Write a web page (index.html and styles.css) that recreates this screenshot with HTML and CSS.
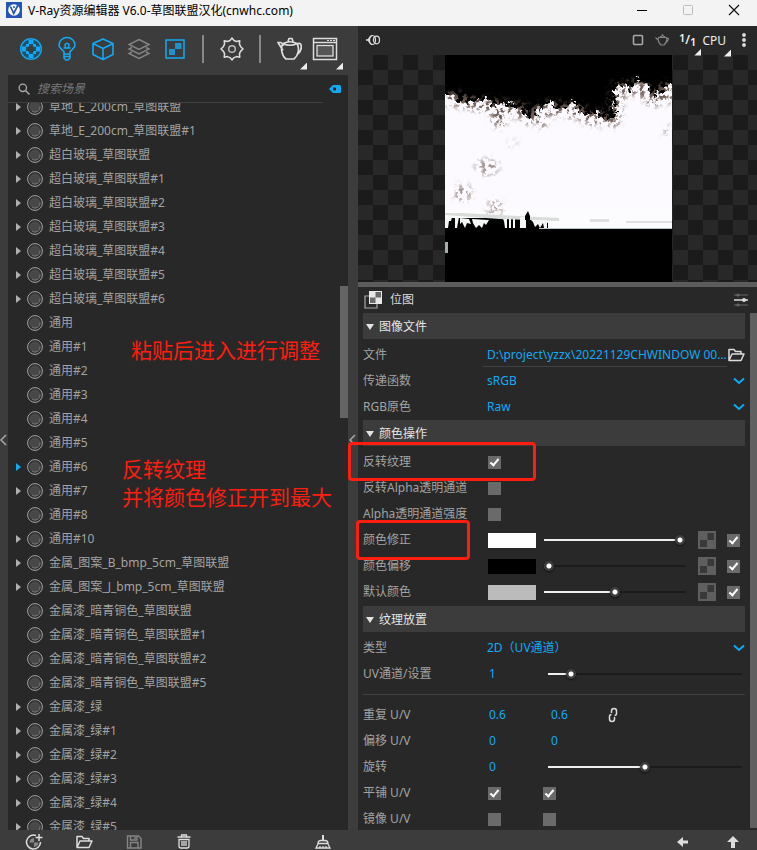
FILE: index.html
```html
<!DOCTYPE html>
<html lang="zh-CN">
<head>
<meta charset="utf-8">
<title>V-Ray资源编辑器</title>
<link rel="stylesheet" href="styles.css">
</head>
<body>
<svg class="defs" aria-hidden="true">
  <symbol id="ball" viewBox="0 0 16 16"><circle cx="8" cy="8" r="7.4" fill="#2b2b2b" stroke="#a6a6a6"/><circle cx="8" cy="8" r="5.8" fill="#484848"/><path d="M13 7.500A5 5 0 0 1 5 12" fill="none" stroke="#777"/></symbol>
  <symbol id="chev" viewBox="0 0 12 8"><path d="M1 1.5l5 4.5 5-4.5" fill="none" stroke="#12aaf5" stroke-width="2"/></symbol>
  <symbol id="tex" viewBox="0 0 18 18"><path d="M0 0h18v18H0z" fill="#5f5f5f"/><path d="M9.500 2H16v7H9.500zM2 9h7v7H2z" fill="#393939"/></symbol>
  <symbol id="folder" viewBox="0 0 18 16"><path d="M2 13.500V2.500h5l1.500 2H14v2.500M2 13.500L5 7h12l-3 6.500z" fill="none" stroke="currentColor" stroke-width="1.500" stroke-linejoin="round"/></symbol>
  <symbol id="pot" viewBox="0 0 26 26"><path d="M7 7.500C4 12 6 20 10 23h8c4-3 6-10 3-15.500M7 7.500Q14 4 21 7.500Q14 11 7 7.500M12 5.500l1-3h3l1 3M7 14.500L2 6.500h3l3 3M21 8c5-3 6 5 1 10" fill="none" stroke="currentColor" stroke-width="1.700" stroke-linejoin="round"/></symbol>
</svg>

<header class="titlebar">
  <svg class="logo" viewBox="0 0 16 16"><path d="M0 0h16v16H0z" fill="#2454b4"/><circle cx="8" cy="8" r="5.800" fill="#fff"/><path d="M4.500 4.500l3.200 7L12 3" fill="none" stroke="#2454b4" stroke-width="1.700"/><circle cx="8" cy="5" r="1" fill="#2454b4"/></svg>
  <h1>V-Ray资源编辑器 V6.0-草图联盟汉化(cnwhc.com)</h1>
  <button class="win" aria-label="最小化"><svg viewBox="0 0 12 12"><path d="M1 6.500h10" stroke="#000"/></svg></button>
  <button class="win" aria-label="最大化"><svg viewBox="0 0 12 12"><rect x="1.500" y="1.500" width="9" height="9" rx="1" fill="none" stroke="#bbb"/></svg></button>
  <button class="win" aria-label="关闭"><svg viewBox="0 0 12 12"><path d="M1 1l10 10M11 1L1 11" stroke="#111" stroke-width="1.200"/></svg></button>
</header>

<main class="app">
  <section class="left">
    <nav class="toolbar">
      <button aria-label="材质"><svg viewBox="0 0 26 26"><circle cx="13" cy="13" r="10.300" fill="#1d4f69" stroke="#18a4e8" stroke-width="1.500"/><path d="M10.500 4h5v4h-5zM10.500 18h5v4h-5zM4 10.500h4v5H4zM18 10.500h4v5h-4zM8 8h3v3H8zM15 8h3v3h-3zM8 15h3v3H8zM15 15h3v3h-3z" fill="#12aaf5"/><path d="M11 10h4l1 1v4l-1 1h-4l-1-1v-4z" fill="#3c3c3c"/></svg></button>
      <button aria-label="灯光"><svg viewBox="0 0 26 26"><path d="M10 18v-2.500C7 13 5 11.500 5 9a8 7.500 0 0 1 16 0c0 2.500-2 4-5 6.500V18M10 18v4l2 2h2l2-2v-4zM10 20.500h6M9.500 12h7M11.500 11.500L11 8.500q2-2.500 4 0l-.5 3" fill="none" stroke="#12aaf5" stroke-width="1.500"/></svg></button>
      <button aria-label="几何体"><svg viewBox="0 0 26 26"><path d="M13 3l10 4.500v11L13 23.500 3 18.500v-11zM3 7.500l10 5 10-5M13 12.500v11" fill="none" stroke="#12aaf5" stroke-width="1.600" stroke-linejoin="round"/></svg></button>
      <button aria-label="图层"><svg viewBox="0 0 26 26"><path d="M13 3.500l10 5-10 5-10-5zM6 11.500l-3 1.500 10 5 10-5-3-1.500M6 16l-3 1.500 10 5 10-5-3-1.500" fill="none" stroke="#858585" stroke-width="1.400"/></svg></button>
      <button aria-label="纹理"><svg viewBox="0 0 26 26"><rect x="4" y="4" width="18" height="18" fill="none" stroke="#12aaf5" stroke-width="1.500"/><path d="M13 7h6.500v6H13zM7 13h6v6H7z" fill="#1b93cf"/></svg></button>
      <span class="sep"></span>
      <button aria-label="设置"><svg viewBox="0 0 26 26"><path d="M11 4.500l2-2.500 2 2.500 2.600 1 3.200-.8-.4 3.200 1.100 2.500L24 13l-2.500 2.400-1.100 2.500.4 3.300-3.200-.6-2.600 1L13 24l-2-2.400-2.600-1-3.200.6.400-3.300-1.100-2.500L2 13l2.500-2.600 1.100-2.500-.4-3.200 3.200.8z" fill="none" stroke="#ddd" stroke-width="1.500" stroke-linejoin="round"/><circle cx="13" cy="13" r="3.300" fill="none" stroke="#bbb" stroke-width="1.500"/></svg></button>
      <span class="sep"></span>
      <button class="more" aria-label="渲染"><svg><use href="#pot"/></svg></button>
      <button class="more" aria-label="帧缓冲"><svg viewBox="0 0 26 26"><path d="M1.500 2.500h23v21h-23zM1.500 6.500h23" fill="none" stroke="#ddd" stroke-width="1.500"/><path d="M15 4.500h2M18 4.500h2M21 4.500h2" stroke="#ddd"/><rect x="5" y="9.500" width="16" height="10.500" fill="#555" stroke="#ddd" stroke-width="1.300"/></svg></button>
    </nav>

    <div class="browser">
      <div class="search">
        <svg class="glass" viewBox="0 0 12 12"><circle cx="4.800" cy="4.800" r="3.700" fill="none" stroke="#aaa" stroke-width="1.300"/><path d="M7.500 7.500l4 4" stroke="#aaa" stroke-width="1.500"/></svg>
        <input type="text" placeholder="搜索场景" aria-label="搜索场景">
        <svg class="tag" viewBox="0 0 12 8"><path d="M0 4l4-4h6.500q1.500 0 1.500 1.500v5Q12 8 10.500 8H4z" fill="#12aaf5"/><circle cx="5.500" cy="4" r="1.700" fill="#282828"/></svg>
      </div>
      <div class="scroll">
        <ul class="assets">
          <li><button class="tw" aria-label="展开"></button><svg><use href="#ball"/></svg>草地_E_200cm_草图联盟</li>
          <li><button class="tw" aria-label="展开"></button><svg><use href="#ball"/></svg>草地_E_200cm_草图联盟#1</li>
          <li><button class="tw" aria-label="展开"></button><svg><use href="#ball"/></svg>超白玻璃_草图联盟</li>
          <li><button class="tw" aria-label="展开"></button><svg><use href="#ball"/></svg>超白玻璃_草图联盟#1</li>
          <li><button class="tw" aria-label="展开"></button><svg><use href="#ball"/></svg>超白玻璃_草图联盟#2</li>
          <li><button class="tw" aria-label="展开"></button><svg><use href="#ball"/></svg>超白玻璃_草图联盟#3</li>
          <li><button class="tw" aria-label="展开"></button><svg><use href="#ball"/></svg>超白玻璃_草图联盟#4</li>
          <li><button class="tw" aria-label="展开"></button><svg><use href="#ball"/></svg>超白玻璃_草图联盟#5</li>
          <li><button class="tw" aria-label="展开"></button><svg><use href="#ball"/></svg>超白玻璃_草图联盟#6</li>
          <li class="leaf"><svg><use href="#ball"/></svg>通用</li>
          <li class="leaf"><svg><use href="#ball"/></svg>通用#1</li>
          <li class="leaf"><svg><use href="#ball"/></svg>通用#2</li>
          <li class="leaf"><svg><use href="#ball"/></svg>通用#3</li>
          <li class="leaf"><svg><use href="#ball"/></svg>通用#4</li>
          <li class="leaf"><svg><use href="#ball"/></svg>通用#5</li>
          <li><button class="tw active" aria-label="展开"></button><svg><use href="#ball"/></svg>通用#6</li>
          <li><button class="tw" aria-label="展开"></button><svg><use href="#ball"/></svg>通用#7</li>
          <li class="leaf"><svg><use href="#ball"/></svg>通用#8</li>
          <li><button class="tw" aria-label="展开"></button><svg><use href="#ball"/></svg>通用#10</li>
          <li><button class="tw" aria-label="展开"></button><svg><use href="#ball"/></svg>金属_图案_B_bmp_5cm_草图联盟</li>
          <li><button class="tw" aria-label="展开"></button><svg><use href="#ball"/></svg>金属_图案_J_bmp_5cm_草图联盟</li>
          <li class="leaf"><svg><use href="#ball"/></svg>金属漆_暗青铜色_草图联盟</li>
          <li class="leaf"><svg><use href="#ball"/></svg>金属漆_暗青铜色_草图联盟#1</li>
          <li class="leaf"><svg><use href="#ball"/></svg>金属漆_暗青铜色_草图联盟#2</li>
          <li class="leaf"><svg><use href="#ball"/></svg>金属漆_暗青铜色_草图联盟#5</li>
          <li><button class="tw" aria-label="展开"></button><svg><use href="#ball"/></svg>金属漆_绿</li>
          <li><button class="tw" aria-label="展开"></button><svg><use href="#ball"/></svg>金属漆_绿#1</li>
          <li><button class="tw" aria-label="展开"></button><svg><use href="#ball"/></svg>金属漆_绿#2</li>
          <li><button class="tw" aria-label="展开"></button><svg><use href="#ball"/></svg>金属漆_绿#3</li>
          <li><button class="tw" aria-label="展开"></button><svg><use href="#ball"/></svg>金属漆_绿#4</li>
          <li><button class="tw" aria-label="展开"></button><svg><use href="#ball"/></svg>金属漆_绿#5</li>
        </ul>
        <span class="thumb"></span>
      </div>
    </div>

    <footer class="actions">
      <button aria-label="新建材质"><svg viewBox="0 0 18 16"><path d="M11 1.500A7 7 0 1 0 15.500 8" fill="none" stroke="#ddd" stroke-width="1.500"/><path d="M9 4v4.500h4.500A5 5 0 0 1 9 13V8.500H4.500A5 5 0 0 1 9 4z" fill="#888"/><path d="M14 0v7M10.500 3.500h7" stroke="#ddd" stroke-width="1.500"/></svg></button>
      <button aria-label="打开"><svg><use href="#folder"/></svg></button>
      <button aria-label="保存"><svg viewBox="0 0 18 16"><path d="M2.500 2h11L16 4.500V14H2.500zM5.500 14V8.500H13V14M5.500 2v4H12V2M10 3v2" fill="none" stroke="#858585" stroke-width="1.400"/></svg></button>
      <button aria-label="删除"><svg viewBox="0 0 18 16"><path d="M2.500 3h13M6.500 2.500V1h5v1.500M4 5.500V12q0 2 2 2h6q2 0 2-2V5.500zM7 7v5M9 7v5M11 7v5" fill="none" stroke="#ddd" stroke-width="1.300"/></svg></button>
      <button class="purge" aria-label="清理"><svg viewBox="0 0 18 16"><path d="M8 1h2v5H8z" fill="#ddd"/><path d="M4 9.500q0-3 3-3h4q3 0 3 3zM4 10l-2 4h14l-2-4M6 14v-2M9 14v-2M12 14v-2" fill="none" stroke="#ddd" stroke-width="1.300"/></svg></button>
    </footer>
    <svg class="fold fold-left" viewBox="0 0 7 12"><path d="M6 1L1 6l5 5" fill="none" stroke="#aaa" stroke-width="1.500"/></svg>
    <svg class="fold fold-right" viewBox="0 0 7 12"><path d="M6 1L1 6l5 5" fill="none" stroke="#aaa" stroke-width="1.500"/></svg>
  </section>

  <section class="right">
    <div class="viewbar">
      <button class="onion" aria-label="预览"><svg viewBox="0 0 16 12"><path d="M1 6h3" stroke="#ddd" stroke-width="1.500"/><path d="M3 6q2-4 4-4.500M3 6q2 4 4 4.500" fill="none" stroke="#ddd" stroke-width="1.200"/><ellipse cx="7.500" cy="6" rx="3" ry="4.500" fill="none" stroke="#ddd" stroke-width="1.200"/><ellipse cx="11.500" cy="6" rx="3" ry="3.800" fill="none" stroke="#ddd" stroke-width="1.200"/></svg></button>
      <button aria-label="停止"><svg viewBox="0 0 14 14"><rect x="2.500" y="2.500" width="9" height="9" rx="1" fill="none" stroke="#aaa" stroke-width="1.500"/></svg></button>
      <button aria-label="渲染预览"><svg viewBox="0 0 14 14"><path d="M3.500 4.500h8c1 3-1 6-2.500 7.500H6C4.500 10.500 2.500 7.500 3.500 4.500zM5 4q2.500-2 5 0M6.500 2h2M3 7L.5 4.500M12 5q3 0-.5 4.500" fill="none" stroke="#858585" stroke-width="1.100"/></svg></button>
      <button class="more ratio"><sup>1</sup>/<sub>1</sub></button>
      <button class="more cpu">CPU</button>
      <button class="dots" aria-label="更多"><svg viewBox="0 0 6 14"><circle cx="3" cy="2" r="1.900" fill="#ddd"/><circle cx="3" cy="7" r="1.900" fill="#ddd"/><circle cx="3" cy="12" r="1.900" fill="#ddd"/></svg></button>
    </div>

    <div class="preview">
      <svg viewBox="0 0 227 227" role="img" aria-label="贴图预览">
        <defs>
          <filter id="rough" x="-5%" y="-5%" width="110%" height="110%"><feTurbulence type="fractalNoise" baseFrequency=".2" numOctaves="3" seed="4"/><feDisplacementMap in="SourceGraphic" scale="14" xChannelSelector="R" yChannelSelector="G"/><feGaussianBlur stdDeviation=".4"/></filter>
          <filter id="specks" x="0" y="0" width="100%" height="100%"><feTurbulence type="fractalNoise" baseFrequency=".22" numOctaves="3" seed="9" result="n"/><feColorMatrix in="n" values="0 0 0 0 .16  0 0 0 0 .11  0 0 0 0 .09  7 0 0 0 -3.500"/><feComposite in2="SourceGraphic" operator="in"/></filter>
          <filter id="soft"><feGaussianBlur stdDeviation="3"/></filter>
          <mask id="fringe"><g filter="url(#soft)" fill="none" stroke="#fff"><path d="M0 42L40 50 76 55 84 62 104 53 135 56 142 62 168 64 173 34 195 32 208 44 227 30" stroke-width="14"/><g fill="#fff" stroke="none"><circle cx="54" cy="64" r="8"/><circle cx="97" cy="68" r="5"/><circle cx="222" cy="40" r="8"/><g fill="#aaa"><ellipse cx="42" cy="112" rx="12" ry="8"/><circle cx="18" cy="138" r="9"/><circle cx="50" cy="153" r="8"/><circle cx="224" cy="76" r="5"/><circle cx="68" cy="88" r="3"/></g></g></g></mask>
        </defs>
        <path d="M0 0h227v227H0z"/>
        <path d="M-8 165V40L8 40 14 48 30 47 40 43 48 50 60 49 68 51 76 53 82 65 90 60 98 51 105 45 112 54 121 52 129 46 134 54 138 61 150 58 161 66 170 61 171 32 178 30 184 36 193 25 203 31 207 42 218 37 225 27 236 30V165z" fill="#fcfafe" filter="url(#rough)"/>
        <path d="M0 160h227v67H0z"/>
        <path d="M0 154h227v19H0z" fill="#fcfbfd"/>
        <path d="M0 0h227v160H0z" filter="url(#specks)" mask="url(#fringe)"/>
        <path d="M0 163L54 163 80 164 95 166 103 168V173H0z" fill="#000"/>
        <path d="M0 158h16l98 5v3l-60-2-54-4z" fill="#d9dcd9"/>
        <path d="M145 164h19v3h-19zM181 166h46v2h-46z" fill="#dedfe0"/>
        <path d="M0 162h7l-1 4H4l-1 7H0zM10 162h4l-2 11h-2zM15 163l9 1 2 5-4-1-2 5-3-6-2 2zM27 164l17 1-3 5-2-2-2 5-3-3-3 3-3-5zM58 164h4v9h-2l-1-7zM64 164h2v9h-2zM68 164h2v9h-2zM75 162h6v11h-6zM86 165h16v8h-3l-1-5-3 5-2-4-3 3-2-5z" fill="#f5f6f6"/>
        <path d="M80 165v-4l3-5 2 5v4z"/>
        <path d="M94 173.500h133" stroke="#b6c7c3"/>
        <path d="M0 187h3v11H0z" fill="#a3adad"/>
      </svg>
    </div>

    <div class="heading">
      <svg class="bitmap" viewBox="0 0 18 18"><path d="M5 5H1v12h12v-4" fill="none" stroke="#aaa" stroke-width="1.200"/><path d="M5 0h13v13H5z" fill="#e8e8e8"/><path d="M11.500 1h5.500v5.500h-5.500zM6 6.500h5.500V12H6z" fill="#6a6a6a"/></svg>
      <h2>位图</h2>
      <button aria-label="选项"><svg viewBox="0 0 14 14"><path d="M0 2h14M0 12h14" stroke="#666"/><path d="M0 7h14" stroke="#ddd" stroke-width="1.500"/><circle cx="4" cy="2" r="1.600" fill="#666"/><circle cx="4" cy="12" r="1.600" fill="#666"/><circle cx="10" cy="7" r="2" fill="#ddd"/></svg></button>
    </div>

    <div class="props">
      <div class="fields">
        <section>
          <h3><button>图像文件</button></h3>
          <div class="row"><label for="file">文件</label><div class="value"><input id="file" class="path" type="text" readonly value="D:\project\yzzx\20221129CHWINDOW 00..."><button class="open" aria-label="浏览"><svg><use href="#folder"/></svg></button></div></div>
          <div class="row"><label for="transfer">传递函数</label><div class="value drop"><select id="transfer"><option>sRGB</option></select><svg><use href="#chev"/></svg></div></div>
          <div class="row"><label for="primaries">RGB原色</label><div class="value drop"><select id="primaries"><option>Raw</option></select><svg><use href="#chev"/></svg></div></div>
        </section>
        <section>
          <h3><button>颜色操作</button></h3>
          <div class="row"><label for="invert">反转纹理</label><div class="value"><input id="invert" type="checkbox" checked></div></div>
          <div class="row"><label for="inverta">反转Alpha透明通道</label><div class="value"><input id="inverta" type="checkbox"></div></div>
          <div class="row"><label for="alpha">Alpha透明通道强度</label><div class="value"><input id="alpha" type="checkbox"></div></div>
          <div class="row"><label for="gain">颜色修正</label><div class="value"><button class="swatch white" aria-label="颜色"></button><input id="gain" type="range" value="100" style="--fill:96%"><button class="tex" aria-label="贴图"><svg><use href="#tex"/></svg></button><input type="checkbox" checked aria-label="启用"></div></div>
          <div class="row"><label for="offset">颜色偏移</label><div class="value"><button class="swatch black" aria-label="颜色"></button><input id="offset" type="range" value="0" style="--fill:0%"><button class="tex" aria-label="贴图"><svg><use href="#tex"/></svg></button><input type="checkbox" checked aria-label="启用"></div></div>
          <div class="row"><label for="default">默认颜色</label><div class="value"><button class="swatch grey" aria-label="颜色"></button><input id="default" type="range" value="50" style="--fill:50%"><button class="tex" aria-label="贴图"><svg><use href="#tex"/></svg></button><input type="checkbox" checked aria-label="启用"></div></div>
        </section>
        <section>
          <h3><button>纹理放置</button></h3>
          <div class="row"><label for="type">类型</label><div class="value drop"><select id="type"><option>2D（UV通道）</option></select><svg><use href="#chev"/></svg></div></div>
          <div class="row"><label for="uv">UV通道/设置</label><div class="value"><input id="uv" class="num" type="text" value="1"><input class="wide" type="range" value="10" aria-label="UV通道" style="--fill:12%"></div></div>
          <hr>
          <div class="row"><label for="repeat">重复 U/V</label><div class="value"><input id="repeat" class="num" type="text" value="0.6"><input class="num" type="text" value="0.6" aria-label="重复 V"><button class="link" aria-label="锁定"><svg viewBox="0 0 12 16"><path d="M4.500 6V4q0-2.500 2.500-2.500T9.500 4v2.500q0 2-2 2M7.500 10v2q0 2.500-2.500 2.500T2.500 12V9.500q0-2 2-2" fill="none" stroke="#ddd" stroke-width="1.500"/></svg></button></div></div>
          <div class="row"><label for="shift">偏移 U/V</label><div class="value"><input id="shift" class="num" type="text" value="0"><input class="num" type="text" value="0" aria-label="偏移 V"></div></div>
          <div class="row"><label for="rotate">旋转</label><div class="value"><input id="rotate" class="num" type="text" value="0"><input class="wide" type="range" value="50" aria-label="旋转" style="--fill:50%"></div></div>
          <div class="row"><label for="tile">平铺 U/V</label><div class="value pair"><input id="tile" type="checkbox" checked><input type="checkbox" checked aria-label="平铺 V"></div></div>
          <div class="row"><label for="mirror">镜像 U/V</label><div class="value pair"><input id="mirror" type="checkbox"><input type="checkbox" aria-label="镜像 V"></div></div>
        </section>
      </div>
      <span class="track"></span>
    </div>

    <footer class="actions history">
      <button aria-label="后退"><svg viewBox="0 0 16 16"><path d="M2 8l6-5v3.500h5v3H8V13z" fill="#ddd"/></svg></button>
      <button aria-label="向上"><svg viewBox="0 0 16 16"><path d="M8 2l6 6h-4v6H6V8H2z" fill="#ddd"/></svg></button>
    </footer>
  </section>
</main>

<p class="note note-a">粘贴后进入进行调整</p>
<p class="note note-b">反转纹理<br>并将颜色修正开到最大</p>
<span class="frame frame-a"></span>
<span class="frame frame-b"></span>
</body>
</html>
```
FILE: styles.css
```css
* { box-sizing: border-box; }

body {
  margin: 0;
  height: 100vh;
  display: flex;
  flex-direction: column;
  position: relative;
  overflow: hidden;
  background: #3c3c3c;
  color: #a3a3a3;
  font: 12px/16px "Noto Sans", "Noto Sans CJK SC", sans-serif;
}

h1, h2, h3, p, ul { margin: 0; padding: 0; font: inherit; }
button, input, select { margin: 0; padding: 0; border: 0; background: none; color: inherit; font: inherit; }
button { display: flex; align-items: center; justify-content: center; }
svg { display: block; flex: none; }
.defs { position: absolute; width: 0; height: 0; }

.titlebar { flex: none; display: flex; height: 26px; padding-left: 6px; background: #f3f3f3; color: #000; }
.logo { width: 16px; height: 16px; margin-top: 2px; }
.titlebar h1 { flex: 1; padding: 3px 0 0 6px; white-space: nowrap; }
.win { width: 46px; height: 20px; }
.win svg { width: 12px; height: 12px; }

.app { flex: 1; display: flex; min-height: 0; }
.left { flex: none; width: 358px; display: flex; flex-direction: column; position: relative; }
.right { flex: 1; min-width: 0; display: flex; flex-direction: column; background: #282828; }

.toolbar { flex: none; display: flex; align-items: center; gap: 10px; height: 49px; padding: 0 18px 4px; color: #ddd; }
.toolbar button, .toolbar svg { width: 26px; height: 26px; }
.sep { width: 2px; height: 28px; margin: 0 5px 0 4px; background: #888; }
.more { position: relative; }
.more::after {
  content: "";
  position: absolute;
  right: -5px;
  bottom: -8px;
  width: 7px;
  height: 7px;
  background: #eee;
  clip-path: polygon(100% 0, 100% 100%, 0 100%);
}

.browser { flex: 1; min-height: 0; display: flex; flex-direction: column; margin: 0 10px 0 8px; background: #282828; }
.search { flex: none; display: flex; align-items: center; height: 28px; padding: 0 7px 0 10px; background: linear-gradient(#404040, #404040) 0 100% / 315px 1px no-repeat; }
.glass { width: 12px; height: 12px; }
.search input { flex: 1; min-width: 0; padding-left: 7px; font-style: italic; outline: none; }
.search input::placeholder { color: #777; }
.tag { width: 12px; height: 8px; }
.scroll { flex: 1; min-height: 0; overflow: hidden; position: relative; }
.assets { list-style: none; margin-top: -8px; }
.assets li { display: flex; align-items: center; height: 24px; padding-left: 8px; white-space: nowrap; }
.assets svg { width: 16px; height: 16px; margin-right: 6px; }
.assets .leaf { padding-left: 19px; }
.tw { width: 5px; height: 8px; margin-right: 6px; background: #b0b0b0; clip-path: polygon(0 0, 100% 50%, 0 100%); }
.tw.active { background: #12aaf5; }
.thumb { position: absolute; right: 0; top: 183px; width: 8px; height: 132px; background: #646464; }
.fold { position: absolute; top: 408px; width: 7px; height: 12px; }
.fold-left { left: 0; }
.fold-right { right: 2px; }

.actions { flex: none; display: flex; gap: 32px; height: 20px; padding: 4px 26px 0 25px; color: #ddd; background: #3c3c3c; }
.actions button, .actions svg { width: 18px; height: 16px; }
.purge { margin-left: auto; }
.history { justify-content: flex-end; padding-right: 15px; }

.viewbar { flex: none; display: flex; align-items: center; gap: 10px; height: 29px; padding: 0 10px 2px 7px; color: #eee; }
.viewbar svg { width: 14px; height: 14px; }
.viewbar .onion { margin-right: auto; }
.viewbar .onion svg { width: 16px; height: 12px; }
.viewbar .dots svg { width: 6px; }
.viewbar .ratio { margin-right: -4px; font-weight: 600; }
.ratio sup, .ratio sub { font-size: 11px; line-height: 12px; }
.ratio sup { margin-bottom: 4px; }
.ratio sub { margin-top: 4px; }
.cpu { margin-right: 5px; padding-top: 2px; }

.preview {
  flex: none;
  display: flex;
  justify-content: center;
  height: 232px;
  padding-left: 2px;
  border-bottom: 5px solid #5c5c5c;
  background: repeating-conic-gradient(#1b1b1b 0 25%, #282828 0 50%) 0 0 / 30px 30px;
}
.preview svg { width: 227px; height: 227px; }

.heading { flex: none; display: flex; align-items: center; height: 26px; padding: 0 9px 0 6px; color: #ddd; }
.bitmap { width: 18px; height: 18px; }
.heading h2 { flex: 1; padding-left: 8px; }
.heading button svg { width: 14px; height: 14px; }

.props { flex: 1; min-height: 0; display: flex; overflow: hidden; }
.fields { flex: 1; min-width: 0; padding: 0 5px; }
.track { width: 7px; margin-bottom: 2px; background: #606060; }
h3 { height: 26px; margin-bottom: 3px; background: #3c3c3c; color: #e4e4e4; }
h3 button { height: 26px; padding-top: 2px; }
h3 button::before { content: ""; width: 8px; height: 6px; margin: 0 5px 0 3px; background: #e4e4e4; clip-path: polygon(0 0, 100% 0, 50% 100%); }
.fields section:last-child { padding-top: 1px; }
.row { display: grid; grid-template-columns: 120px 1fr; align-items: center; height: 26px; }
.row label { white-space: nowrap; }
.value { display: flex; align-items: center; min-width: 0; padding-left: 5px; color: #12aaf5; }
.path { flex: 1; min-width: 0; height: 24px; margin-left: -5px; padding-left: 4px; border-bottom: 1px solid #404040; outline: none; }
.open { color: #ddd; }
.open svg { width: 18px; height: 16px; }
.drop svg { width: 12px; height: 8px; margin-left: -12px; pointer-events: none; }
.drop select { flex: 1; appearance: none; margin-left: -1px; }
.num { width: 60px; padding-left: 1px; margin-right: 2px; min-width: 0; }
.num + .num { width: 55px; }
.link svg { width: 12px; height: 16px; }
hr { height: 1px; margin: 7px 0; border: 0; background: #404040; }

input[type="checkbox"] { appearance: none; flex: none; width: 13px; height: 13px; background: #6a6a6a; }
input[type="checkbox"]:checked::after { content: ""; display: block; width: 3px; height: 7px; margin: 1px 0 0 4px; border: solid #fff; border-width: 0 2px 2px 0; transform: rotate(40deg); }
.value > input[type="checkbox"]:last-child:not(:first-child) { margin-right: 5px; }
.pair { gap: 42px; }

.swatch { flex: none; width: 48px; height: 15px; margin-right: 8px; }
.white { background: #fff; }
.black { background: #000; }
.grey { background: #bbb; }
.tex { margin: 0 11px 0 13px; }
.tex svg { width: 18px; height: 18px; }

input[type="range"] {
  appearance: none;
  flex: 1;
  min-width: 0;
  height: 14px;
  background: linear-gradient(90deg, #eee var(--fill), #1b1b1b var(--fill)) 0 50% / 100% 2px no-repeat;
}
input[type="range"]::-webkit-slider-thumb { appearance: none; width: 10px; height: 10px; border-radius: 50%; background: radial-gradient(circle, #fff 2px, #3e3e3e 3px); box-shadow: 0 1px 2px #111; }
.value .wide { margin: 0 3px 0 -2px; }

.note { position: absolute; color: #ff1d0f; font-size: 21px; line-height: 28px; white-space: nowrap; }
.note-a { left: 131px; top: 336px; }
.note-b { left: 122px; top: 455px; }
.frame { position: absolute; border: 3px solid #ff1d0f; border-radius: 4px; pointer-events: none; }
.frame-a { left: 348px; top: 442px; width: 188px; height: 39px; }
.frame-b { left: 356px; top: 520px; width: 114px; height: 40px; }
```
